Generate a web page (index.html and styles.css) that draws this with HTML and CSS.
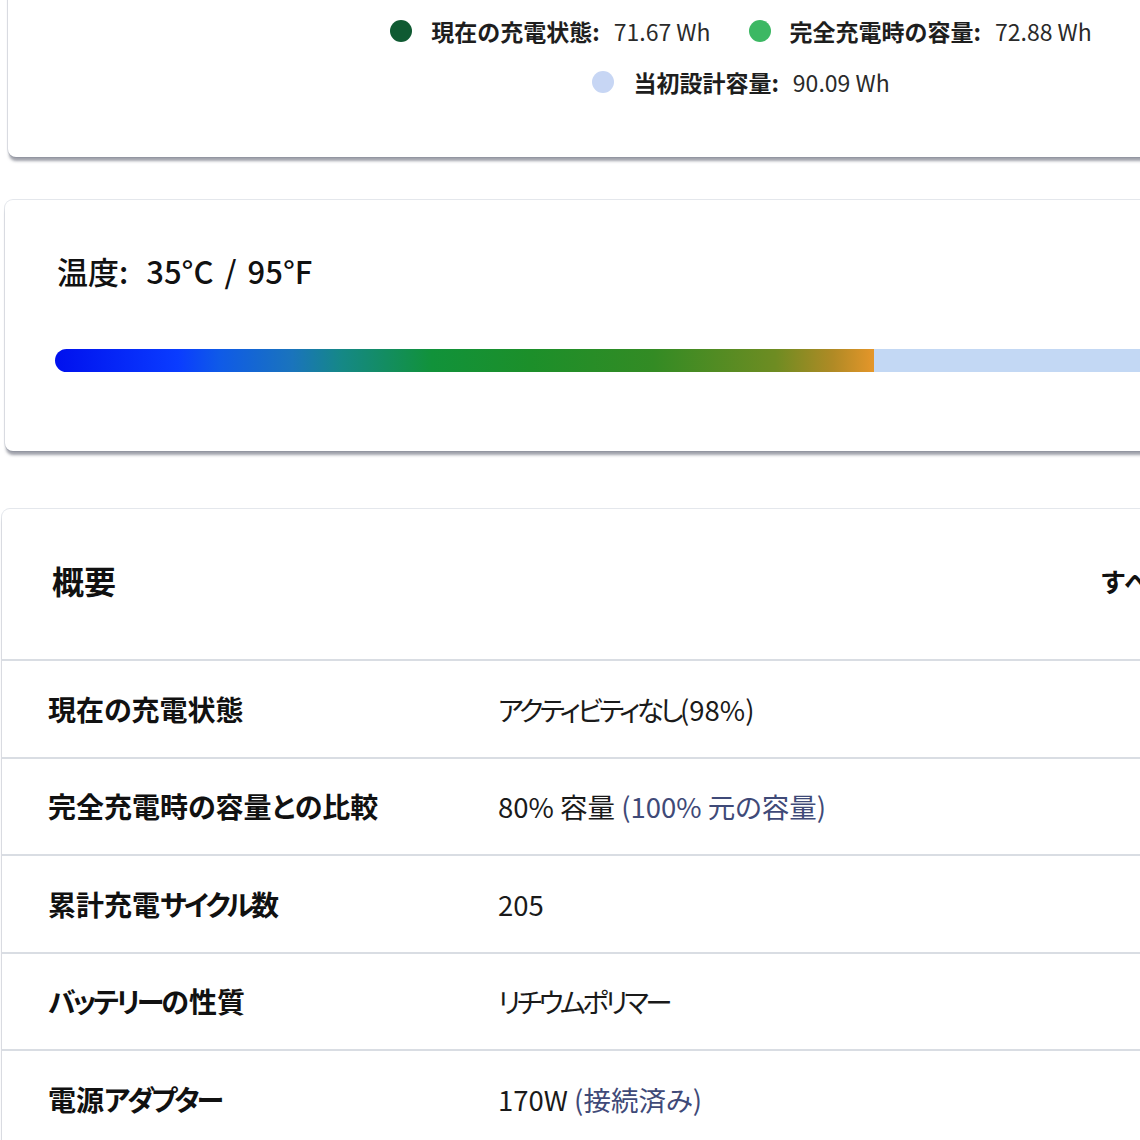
FILE: index.html
```html
<!DOCTYPE html>
<html lang="ja">
<head>
<meta charset="utf-8">
<link rel="stylesheet" href="styles.css">
</head>
<body>
<div class="page">
  <section class="card card-legend">
    <div class="legend-row">
      <div class="legend-item"><span class="dot dot-dark"></span><span class="lg-label">現在の充電状態:</span><span class="lg-value">71.67 Wh</span></div>
      <div class="legend-item"><span class="dot dot-mid"></span><span class="lg-label">完全充電時の容量:</span><span class="lg-value">72.88 Wh</span></div>
    </div>
    <div class="legend-row">
      <div class="legend-item"><span class="dot dot-light"></span><span class="lg-label">当初設計容量:</span><span class="lg-value">90.09 Wh</span></div>
    </div>
  </section>

  <section class="card card-temp">
    <h2 class="temp-title"><span class="temp-key">温度:</span><span class="temp-val">35°C / 95°F</span></h2>
    <div class="temp-bar">
      <div class="temp-fill"></div>
      <div class="temp-rest"></div>
    </div>
  </section>

  <section class="card card-summary">
    <div class="summary-head">
      <h2 class="summary-title">概要</h2>
      <span class="summary-link">すべて表示</span>
    </div>
    <div class="summary-row">
      <div class="row-label">現在の充電状態</div>
      <div class="row-value"><span class="kana">アクティビティなし</span>(98%)</div>
    </div>
    <div class="summary-row">
      <div class="row-label">完全充電時の容量との比較</div>
      <div class="row-value">80% 容量 <span class="muted">(100% 元の容量)</span></div>
    </div>
    <div class="summary-row">
      <div class="row-label">累計充電<span class="kana-l">サイクル</span>数</div>
      <div class="row-value">205</div>
    </div>
    <div class="summary-row">
      <div class="row-label"><span class="kana-l">バッテリー</span>の性質</div>
      <div class="row-value"><span class="kana">リチウムポリマー</span></div>
    </div>
    <div class="summary-row">
      <div class="row-label">電源<span class="kana-l">アダプター</span></div>
      <div class="row-value">170W <span class="muted">(接続済み)</span></div>
    </div>
  </section>
</div>
</body>
</html>
```

FILE: styles.css
```css
html, body {
  margin: 0;
  background: #ffffff;
  overflow: hidden;
}

body {
  font-family: "Noto Sans CJK JP", "Noto Sans", sans-serif;
  color: #141414;
}

.page {
  width: 1600px;
}

.card {
  background: #ffffff;
  border-radius: 8px;
  width: 1466px;
  box-shadow: 0 5px 3px -1px rgba(80, 84, 100, 0.55), 0 0 0 1px #e4e7ec;
}

/* legend card */
.card-legend {
  margin: -20px 0 0 8px;
  padding: 36px 0 60px;
  display: flex;
  flex-direction: column;
  align-items: center;
  gap: 21px;
}

.legend-row {
  display: flex;
  align-items: center;
  gap: 38px;
  height: 30px;
}

.legend-item {
  display: flex;
  align-items: center;
  font-size: 23px;
  color: #1e1e1e;
}

.dot {
  width: 22px;
  height: 22px;
  border-radius: 50%;
  margin-right: 19px;
}

.dot-dark { background: #0f5a32; }
.dot-mid { background: #3cb863; }
.dot-light { background: #c7d6f4; }

.lg-label {
  font-weight: 700;
  margin-right: 14px;
}

.lg-value {
  font-weight: 400;
  color: #2a2a2a;
}

/* temperature card */
.card-temp {
  margin: 43px 0 0 5px;
  padding: 51px 0 79px 52px;
}

.temp-title {
  margin: 0;
  font-size: 31px;
  line-height: 40px;
  font-weight: 500;
  color: #111;
  display: flex;
  align-items: center;
}

.temp-key {
  margin-right: 18px;
}

.temp-val {
  word-spacing: 4px;
}

.temp-bar {
  display: flex;
  margin: 58px 0 0 -2px;
  height: 23px;
}

.temp-fill {
  width: 819px;
  border-radius: 12px 0 0 12px;
  background: linear-gradient(90deg,
    #0010ee 0%,
    #0a3cff 15%,
    #0f5ae8 20%,
    #1a74bc 29%,
    #158886 35%,
    #11923a 46%,
    #1c8f2a 58%,
    #338b24 73%,
    #6e8c22 88%,
    #b08a25 95%,
    #e5962a 100%);
}

.temp-rest {
  flex: 1;
  background: #c3d8f4;
}

/* summary card */
.card-summary {
  margin: 58px 0 0 2px;
  padding-bottom: 40px;
}

.summary-head {
  display: grid;
  grid-template-columns: 1048px auto;
  align-items: center;
  height: 150px;
  padding-left: 50px;
  box-sizing: border-box;
}

.summary-title {
  margin: 0;
  font-size: 32px;
  font-weight: 700;
  color: #111;
  transform: translateY(-4px);
}

.summary-link {
  font-size: 26px;
  font-weight: 700;
  color: #111;
  transform: translateY(-4px);
}

.summary-row {
  display: grid;
  grid-template-columns: 450px 1fr;
  align-items: center;
  height: 95.5px;
  padding-left: 46px;
  border-top: 2px solid #d9dde3;
}

.row-label {
  font-size: 28px;
  font-weight: 700;
  color: #111;
  font-feature-settings: "palt";
}

.row-value {
  font-size: 27.5px;
  font-weight: 400;
  color: #1a1a1a;
  font-feature-settings: "palt";
}

.kana {
  letter-spacing: -3.5px;
}

.kana-l {
  letter-spacing: -3px;
}

.muted {
  color: #3f4a78;
}
```
